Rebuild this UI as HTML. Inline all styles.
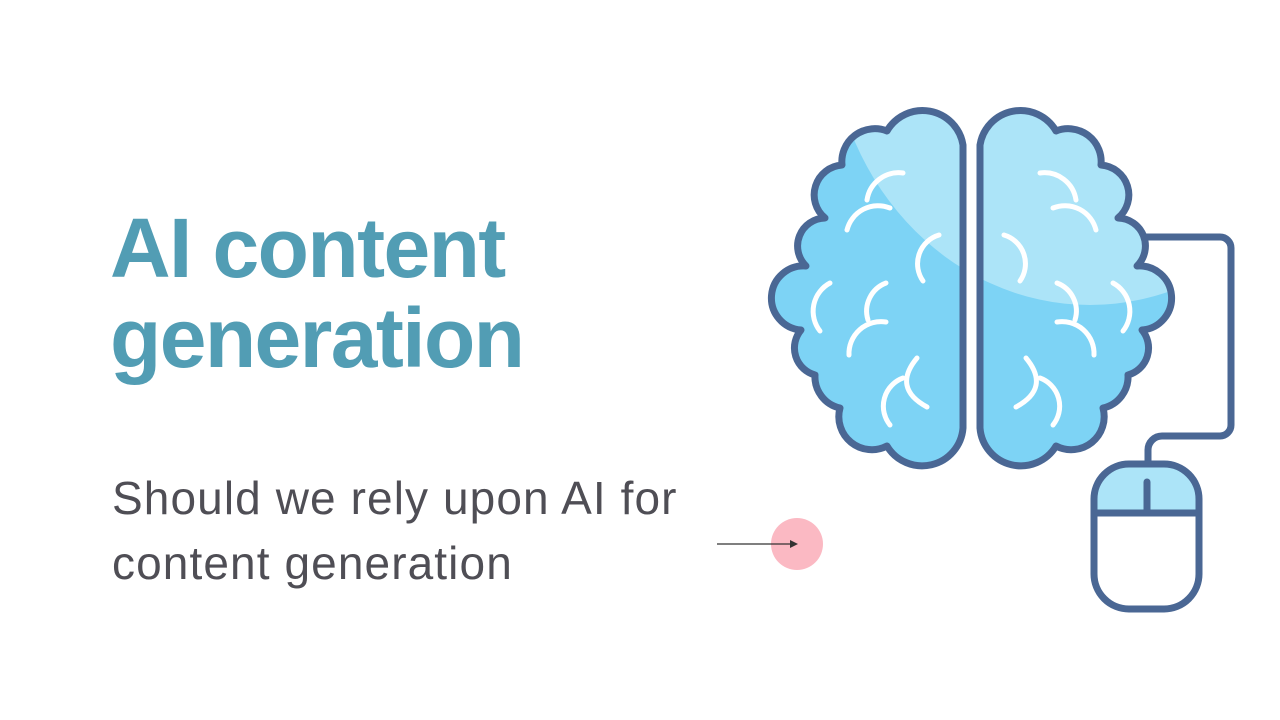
<!DOCTYPE html>
<html><head><meta charset="utf-8"><style>
html,body{margin:0;padding:0;background:#fff;width:1280px;height:720px;overflow:hidden;position:relative;font-family:"Liberation Sans",sans-serif}
.t{position:absolute;left:110px;color:#529DB4;font-weight:bold;font-size:84px;letter-spacing:-1.6px;line-height:1;white-space:nowrap}
.s{position:absolute;left:112px;color:#4F4E55;font-size:46px;letter-spacing:1.1px;line-height:1;white-space:nowrap}
svg{position:absolute;left:0;top:0}
</style></head><body>
<div class="t" style="top:206px">AI content</div>
<div class="t" style="top:296px">generation</div>
<div class="s" style="top:475px">Should we rely upon AI for</div>
<div class="s" style="top:540px">content generation</div>
<svg width="1280" height="720" viewBox="0 0 1280 720">
<defs>
<path id="hem" d="M963,145 L963,428 A41,41 0 0 1 887,446 A33,33 0 0 1 840,408 A32,32 0 0 1 815,375 A28,28 0 0 1 801,330 A28,28 0 0 1 806,266 A28,28 0 0 1 825,218 A30,30 0 0 1 842,165 A33,33 0 0 1 887,131 A41,41 0 0 1 963,145 Z"/>
<clipPath id="cl"><use href="#hem"/></clipPath>
<clipPath id="cr"><use href="#hem" transform="translate(1943,0) scale(-1,1)"/></clipPath>
<g id="folds" fill="none" stroke="#fff" stroke-width="5" stroke-linecap="round">
<path d="M903,173 A32,32 0 0 0 867,200"/>
<path d="M890,208 A32,32 0 0 0 847,230"/>
<path d="M939,235 A30,30 0 0 0 923,281"/>
<path d="M830,283 A32,32 0 0 0 820,331"/>
<path d="M886,283 A30,30 0 0 0 868,320"/>
<path d="M886,322 A32,32 0 0 0 849,355"/>
<path d="M917,358 Q892,388 927,407"/>
<path d="M903,378 A30,30 0 0 0 890,425"/>
</g>
</defs>
<g clip-path="url(#cl)"><rect x="760" y="90" width="220" height="400" fill="#7DD3F5"/><ellipse cx="1090" cy="20" rx="260" ry="285" fill="#ACE4F8"/></g>
<g clip-path="url(#cr)"><rect x="970" y="90" width="220" height="400" fill="#7DD3F5"/><ellipse cx="1090" cy="20" rx="260" ry="285" fill="#ACE4F8"/></g>
<use href="#hem" fill="none" stroke="#4A6794" stroke-width="7" stroke-linejoin="round"/>
<use href="#hem" transform="translate(1943,0) scale(-1,1)" fill="none" stroke="#4A6794" stroke-width="7" stroke-linejoin="round"/>
<use href="#folds"/>
<use href="#folds" transform="translate(1943,0) scale(-1,1)"/>
<path d="M1145,237 H1220 A11,11 0 0 1 1231,248 V425 A11,11 0 0 1 1220,436 H1162 A14,14 0 0 0 1148,450 V464" fill="none" stroke="#4A6794" stroke-width="7"/>
<path d="M1094,513 V499 A35,35 0 0 1 1129,464 H1164 A35,35 0 0 1 1199,499 V513 Z" fill="#ACE4F8"/>
<rect x="1094" y="464" width="105" height="145" rx="35" fill="none" stroke="#4A6794" stroke-width="7"/>
<line x1="1094" y1="513" x2="1199" y2="513" stroke="#4A6794" stroke-width="7"/>
<line x1="1147" y1="482" x2="1147" y2="513" stroke="#4A6794" stroke-width="7" stroke-linecap="round"/>
<circle cx="797" cy="544" r="26" fill="#FBB9C3"/>
<line x1="717" y1="544" x2="792" y2="544" stroke="#333" stroke-width="1.2"/>
<path d="M790,540 L798,544 L790,548 Z" fill="#333"/>
</svg>
</body></html>
